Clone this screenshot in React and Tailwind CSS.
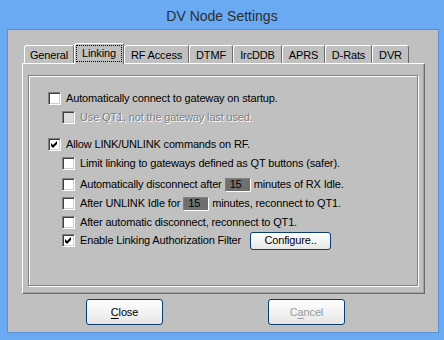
import React from 'react'

const tabs = [
  { label: 'General', w: 'w-[50px]' },
  { label: 'Linking', w: 'w-[50px]', active: true },
  { label: 'RF Access', w: 'w-[65px]' },
  { label: 'DTMF', w: 'w-[44px]' },
  { label: 'IrcDDB', w: 'w-[49px]' },
  { label: 'APRS', w: 'w-[43px]' },
  { label: 'D-Rats', w: 'w-[47px]' },
  { label: 'DVR', w: 'w-[37px]' },
]

function Check({ checked, disabled }) {
  return (
    <span
      className={`flex h-[13px] w-[13px] shrink-0 items-center justify-center border border-t-[#808080] border-l-[#808080] border-b-white border-r-white shadow-[inset_1px_1px_0_#404040,inset_-1px_-1px_0_#d4d0c8] ${
        disabled ? 'bg-[#dcdcdc]' : 'bg-white'
      }`}
    >
      {checked && (
        <svg width="7" height="7" viewBox="0 0 7 7">
          <polygon points="0,2 2,4 6,0 6,3 2,7 0,5" fill="#000" />
        </svg>
      )}
    </span>
  )
}

function Row({ checked, disabled, indent, className = '', children }) {
  return (
    <div className={`flex h-[13px] items-center ${indent ? 'pl-[14px]' : ''} ${className}`}>
      <Check checked={checked} disabled={disabled} />
      <div
        className={`ml-[5px] flex items-center whitespace-nowrap leading-none ${
          disabled ? 'text-[#808080] [text-shadow:1px_1px_0_#ffffff]' : 'text-black'
        }`}
      >
        {children}
      </div>
    </div>
  )
}

function Minutes() {
  return (
    <span className="mx-[3px] flex h-[14px] w-[26px] items-center border border-t-[#808080] border-l-[#808080] border-b-white border-r-white bg-[#6f6f6f] pl-[4px] text-black">
      15
    </span>
  )
}

function WinButton({ children, disabled, className = '' }) {
  return (
    <button
      type="button"
      className={`flex items-center justify-center rounded-[3px] border border-[#0b3d6f] bg-gradient-to-b from-[#ffffff] to-[#e6e6e6] ${
        disabled ? 'text-[#9a9a9a]' : 'text-black'
      } ${className}`}
    >
      {children}
    </button>
  )
}

export default function App() {
  return (
    <div className="flex h-[340px] w-[444px] flex-col bg-[#69aaf2] font-['Liberation_Sans',Arial,sans-serif] text-[11px] tracking-[-0.15px]">
      <div className="flex h-[29px] items-center justify-center pt-[3px] text-[14px] tracking-normal text-[#2e2e2e]">
        DV Node Settings
      </div>

      <div className="ml-[7px] flex h-[304px] w-[432px] flex-col border border-[#5a90d2] bg-[#c0c0c0] pl-[14px] pt-[13px]">
        {/* tab strip */}
        <div className="relative z-10 flex h-[20px] items-end pl-[2px]">
          {tabs.map((t) =>
            t.active ? (
              <div
                key={t.label}
                className={`${t.w} -mb-[1px] flex h-[21px] items-start justify-center rounded-t-[3px] border-l border-t border-r border-l-white border-t-white border-r-[#696969] bg-[#c0c0c0] pt-[1px]`}
              >
                <span className="flex h-[17px] w-[46px] items-center justify-center border border-dotted border-black">
                  {t.label}
                </span>
              </div>
            ) : (
              <div
                key={t.label}
                className={`${t.w} flex h-[18px] items-center justify-center rounded-t-[3px] border-l border-t border-r border-l-white border-t-white border-r-[#696969] pt-[1px]`}
              >
                {t.label}
              </div>
            )
          )}
        </div>

        {/* tab panel */}
        <div className="h-[231px] w-[403px] border border-l-white border-t-white border-r-[#696969] border-b-[#696969] pl-[5px] pt-[11px] shadow-[inset_-1px_-1px_0_#a0a0a0]">
          <div className="flex h-[211px] w-[390px] flex-col border border-[#808080] pl-[19px] pt-[16px] shadow-[1px_1px_0_#ffffff,inset_1px_1px_0_#ffffff]">
            <Row>Automatically connect to gateway on startup.</Row>
            <Row indent disabled className="mt-[6px]">
              Use QT1, not the gateway last used.
            </Row>
            <Row checked className="mt-[14px]">
              Allow LINK/UNLINK commands on RF.
            </Row>
            <Row indent className="mt-[6px]">
              Limit linking to gateways defined as QT buttons (safer).
            </Row>
            <Row indent className="mt-[8px]">
              Automatically disconnect after
              <Minutes />
              minutes of RX Idle.
            </Row>
            <Row indent className="mt-[6px]">
              After UNLINK Idle for
              <Minutes />
              minutes, reconnect to QT1.
            </Row>
            <Row indent className="mt-[6px]">
              After automatic disconnect, reconnect to QT1.
            </Row>
            <Row indent checked className="mt-[5px]">
              <span className="w-[170px]">Enable Linking Authorization Filter</span>
              <WinButton className="h-[18px] w-[81px]">Configure..</WinButton>
            </Row>
          </div>
        </div>

        {/* dialog buttons */}
        <div className="mt-[5px] flex pl-[64px]">
          <WinButton className="h-[26px] w-[77px]">
            <span className="underline underline-offset-2">C</span>lose
          </WinButton>
          <WinButton disabled className="ml-[105px] h-[26px] w-[77px]">
            C<span className="underline underline-offset-2">a</span>ncel
          </WinButton>
        </div>
      </div>
    </div>
  )
}
